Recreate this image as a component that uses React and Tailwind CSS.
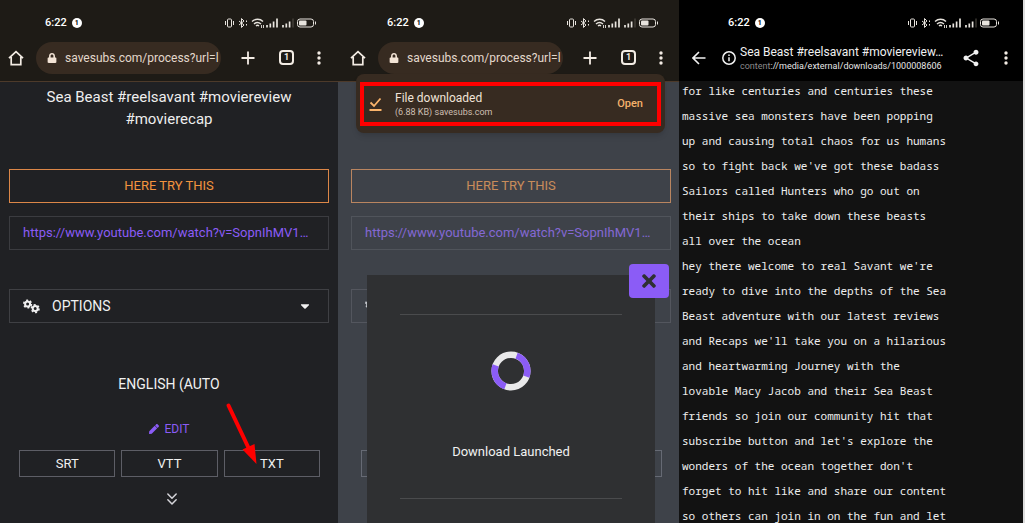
import { FaCaretDown, FaLock, FaPen, FaTimes } from 'react-icons/fa'
import { MdShare } from 'react-icons/md'
import { ChevronsDown } from 'lucide-react'

const VIDEO_URL = 'https://www.youtube.com/watch?v=SopnIhMV1'

const FORMATS = ['SRT', 'VTT', 'TXT']

const TRANSCRIPT = [
  'for like centuries and centuries these',
  'massive sea monsters have been popping',
  'up and causing total chaos for us humans',
  "so to fight back we've got these badass",
  'Sailors called Hunters who go out on',
  'their ships to take down these beasts',
  'all over the ocean',
  "hey there welcome to real Savant we're",
  'ready to dive into the depths of the Sea',
  'Beast adventure with our latest reviews',
  "and Recaps we'll take you on a hilarious",
  'and heartwarming Journey with the',
  'lovable Macy Jacob and their Sea Beast',
  'friends so join our community hit that',
  "subscribe button and let's explore the",
  "wonders of the ocean together don't",
  'forget to hit like and share our content',
  'so others can join in on the fun and let',
]

function StatusIcons() {
  return (
    <svg width="92" height="12" viewBox="0 0 92 12" fill="none" stroke="#e8e4de">
      {/* vibrate */}
      <rect x="2.500" y="2" width="4" height="8" rx="1" />
      <path d="M0.500 4v4M8.500 4v4" />
      {/* bluetooth */}
      <path d="M14 4l5 4-2.500 2.500v-9L19 4l-5 4M21.500 3.500v1.500M21.500 7v1.500" />
      {/* wifi */}
      <path d="M27 4.500c3.300-3 8-3 11 0M29 7c2.200-2 4.800-2 7 0M31 9c1-.9 2-.9 3 0" strokeWidth="1.400" />
      <path d="M36.500 8v3M38.500 8v3" strokeWidth="0.900" />
      {/* signal bars */}
      <path d="M42 8v2.500M45.300 6.500v4M48.600 4.500v6M52 1.500v9" strokeWidth="1.700" />
      <path d="M58 8v2.500M61.300 6.500v4M64.600 4.500v6" strokeWidth="1.700" />
      <path d="M68 1.500v9" stroke="#57524b" />
      {/* battery */}
      <rect x="72.500" y="2" width="16" height="8" rx="2.500" />
      <rect x="74" y="3.500" width="7.500" height="5" rx="1" fill="#e8e4de" stroke="none" />
      <path d="M90.500 4.500v3" />
    </svg>
  )
}

function StatusBar() {
  return (
    <div className="flex h-[22px] items-center justify-between">
      <div className="flex items-center gap-[5px] text-[11px] font-medium text-white">
        <span>6:22</span>
        <span className="flex size-2.5 items-center justify-center rounded-full bg-white text-[7px] font-bold text-black">1</span>
      </div>
      <StatusIcons />
    </div>
  )
}

function MoreButton() {
  return (
    <button type="button" aria-label="More options">
      <svg width="6" height="16" viewBox="0 0 6 16" fill="#f3ece4">
        <circle cx="3" cy="3" r="1.700" />
        <circle cx="3" cy="8" r="1.700" />
        <circle cx="3" cy="13" r="1.700" />
      </svg>
    </button>
  )
}

function BrowserToolbar() {
  return (
    <div className="flex h-[47px] items-center">
      <button type="button" aria-label="Home">
        <svg width="16" height="16" viewBox="0 0 16 16" fill="none" stroke="#f3ece4" strokeWidth="1.700">
          <path d="M1 8.200L8 1.600l7 6.600M3.200 7v7.700h9.600V7" />
        </svg>
      </button>
      <div className="ml-3 flex h-8 min-w-0 flex-1 items-center gap-2 rounded-full bg-[#372b21] pl-[11px] pr-1.5">
        <FaLock className="size-2.5 shrink-0 text-[#f3e4d6]" />
        <span className="whitespace-nowrap text-xs text-[#e3d8cc]">savesubs.com/process?url=l</span>
      </div>
      <button type="button" aria-label="New tab" className="ml-5">
        <svg width="14" height="14" viewBox="0 0 14 14" stroke="#f3ece4" strokeWidth="1.800">
          <path d="M7 0.500v13M0.500 7h13" />
        </svg>
      </button>
      <button
        type="button"
        aria-label="Tabs"
        className="ml-6 flex size-[15px] items-center justify-center rounded-[4px] border-2 border-[#f3ece4] text-[9px] font-bold text-[#f3ece4]"
      >
        1
      </button>
      <div className="ml-[22px] flex">
        <MoreButton />
      </div>
    </div>
  )
}

function Gears() {
  return (
    <svg width="17" height="15" viewBox="0 0 17 15" fill="none" stroke="#f1f1f1">
      <circle cx="4.600" cy="5" r="2.500" strokeWidth="2" />
      <circle cx="4.600" cy="5" r="3.800" strokeWidth="1.600" strokeDasharray="1.990 1.990" />
      <circle cx="12.200" cy="9.600" r="2.500" strokeWidth="2" />
      <circle cx="12.200" cy="9.600" r="3.800" strokeWidth="1.600" strokeDasharray="1.990 1.990" />
    </svg>
  )
}

function Arrow() {
  return (
    <svg className="pointer-events-none absolute -top-12 left-0 z-10" width="36" height="64" viewBox="0 0 36 64">
      <path d="M4.500 3.500L26 49" stroke="#fe0000" strokeWidth="4" strokeLinecap="round" />
      <path d="M18.500 47.500L30.500 42L32.500 62z" fill="#fe0000" />
    </svg>
  )
}

// covered: the toast and the modal sit on top, so the labels under them are switched off
function SubtitlePage({ arrow, covered }) {
  const label = covered ? 'invisible' : ''
  return (
    <div className="flex flex-col pt-1">
      <h1 className={`mx-auto max-w-[260px] text-center text-[15px] leading-[22px] text-[#eeeeee] ${label}`}>
        Sea Beast #reelsavant #moviereview #movierecap
      </h1>
      <button type="button" className="mt-[39px] h-[34px] border border-[#dc8748] text-[13px] text-[#f2943f]">
        HERE TRY THIS
      </button>
      <div className="mt-[13px] flex h-[34px] items-center border border-[#3b3c40] pl-[13px] text-[13px] text-[#8b5cf6]">
        <a href={VIDEO_URL} className="whitespace-nowrap">{VIDEO_URL}…</a>
      </div>
      <button type="button" className="mt-[39px] flex h-[34px] items-center border border-[#3f4044] pl-[13px] pr-4 text-sm text-[#f1f1f1]">
        <Gears />
        <span className={`ml-3 ${label}`}>OPTIONS</span>
        <FaCaretDown className="ml-auto size-3.5" />
      </button>
      <h2 className={`mt-[51px] text-center text-sm leading-5 text-[#f1f1f1] ${label}`}>ENGLISH (AUTO</h2>
      <button type="button" className={`mx-auto mt-[25px] flex h-5 items-center gap-1.5 text-xs text-[#8b5cf6] ${label}`}>
        <FaPen className="size-2.5" />
        EDIT
      </button>
      <div className="ml-2.5 mr-[9px] mt-[11px] grid grid-cols-3 gap-1.5">
        {FORMATS.map(format => (
          <div key={format} className="relative flex">
            <button type="button" className="h-[27px] flex-1 border border-[#5d5e66] text-[13px] text-[#f1f1f1]">
              <span className={label}>{format}</span>
            </button>
            {arrow && format === 'TXT' && <Arrow />}
          </div>
        ))}
      </div>
      <div className="mt-3 flex justify-center pl-1.5">
        <ChevronsDown className="size-5 text-[#d5d5da]" strokeWidth={1.8} />
      </div>
    </div>
  )
}

function DownloadToast() {
  return (
    <div className="absolute left-[18px] right-3.5 top-[74px] z-20 rounded-lg bg-[#372b21] px-1 pb-[7px] pt-2 shadow-md">
      <div className="flex h-11 items-center border-4 border-[#fe0000] pl-[5px] pr-3.5">
        <svg width="13" height="14" viewBox="0 0 13 14" fill="none" stroke="#fbb46b" strokeWidth="1.800">
          <path d="M1.500 5.500L5 9l6.500-7.500M0.500 13h12" />
        </svg>
        <div className="ml-[13px]">
          <div className="text-xs leading-4 text-[#f0e3d8]">File downloaded</div>
          <div className="text-[9px] leading-3 text-[#cdbfb2]">(6.88 KB) savesubs.com</div>
        </div>
        <button type="button" className="ml-auto text-[11px] font-medium text-[#f4b26c]">Open</button>
      </div>
    </div>
  )
}

function Spinner() {
  return (
    <svg width="40" height="40" viewBox="0 0 40 40" fill="none" strokeWidth="6.500">
      <circle cx="20" cy="20" r="16.300" stroke="#e9e9ea" />
      <circle
        cx="20"
        cy="20"
        r="16.300"
        stroke="#8b5cf6"
        pathLength="100"
        strokeDasharray="25 25"
        transform="rotate(-70 20 20)"
      />
    </svg>
  )
}

function DownloadModal() {
  return (
    <div role="dialog" aria-label="Download" className="absolute bottom-0 left-[29px] right-6 top-[275px] z-10 bg-[#2f3032] px-[33px] pt-[39px]">
      <button
        type="button"
        aria-label="Close"
        className="absolute -right-3.5 -top-[11px] flex h-[34px] w-10 items-center justify-center rounded bg-[#8b5cf6] text-[#2f3032]"
      >
        <FaTimes className="size-5" />
      </button>
      <div className="flex flex-col items-center border-y border-[#4a4b4d] pb-9 pt-9 text-[13px] leading-5 text-[#f1f1f1]">
        <Spinner />
        <p className="mt-[51px]">Download Launched</p>
      </div>
    </div>
  )
}

function TranscriptViewer() {
  return (
    <section className="min-w-0 overflow-hidden border-r-2 border-[#dedede] bg-[#121212]">
      <header className="bg-black pt-3">
        <div className="pl-[49px] pr-[23px]">
          <StatusBar />
        </div>
        <div className="flex h-[47px] items-center pl-[13px] pr-3.5">
          <button type="button" aria-label="Back">
            <svg width="14" height="14" viewBox="0 0 14 14" fill="none" stroke="#f1f1f1" strokeWidth="1.600">
              <path d="M13.500 7H1.500M7 1L1 7l6 6" />
            </svg>
          </button>
          <svg className="ml-4 shrink-0" width="14" height="14" viewBox="0 0 14 14" fill="none" stroke="#f1f1f1" strokeWidth="1.500">
            <circle cx="7" cy="7" r="6.200" />
            <path d="M7 6.200v4M7 3.500v1.500" />
          </svg>
          <div className="ml-1 min-w-0 flex-1 whitespace-nowrap">
            <div className="text-xs leading-4 text-[#f1f1f1]">Sea Beast #reelsavant #moviereview…</div>
            <div className="text-[9px] leading-3 text-[#e6e6e6]">
              <span className="text-[#8a8a8a]">content</span>://media/external/downloads/1000008606
            </div>
          </div>
          <button type="button" aria-label="Share">
            <MdShare className="size-5 text-[#f1f1f1]" />
          </button>
          <div className="ml-[22px] flex">
            <MoreButton />
          </div>
        </div>
      </header>
      <div className="flex flex-col gap-[5px] whitespace-nowrap pl-[3px] font-['Noto_Sans_Mono','DejaVu_Sans_Mono',monospace] text-[11px] leading-5 text-[#eeeeee]">
        {TRANSCRIPT.map(line => (
          <p key={line}>{line}</p>
        ))}
      </div>
    </section>
  )
}

export default function App() {
  return (
    <main className="grid h-screen grid-cols-[338fr_341fr_346fr] overflow-hidden bg-[#202124] font-[Roboto,sans-serif]">
      <section className="min-w-0 overflow-hidden">
        <header className="border-b border-[#4d3a2a] bg-[#1e1b16] pt-3">
          <div className="pl-[45px] pr-[21px]">
            <StatusBar />
          </div>
          <div className="pl-2 pr-4">
            <BrowserToolbar />
          </div>
        </header>
        <div className="px-[9px]">
          <SubtitlePage arrow />
        </div>
      </section>

      <section className="relative min-w-0 overflow-hidden">
        <header className="border-b border-[#4d3a2a] bg-[#1e1b16] pt-3">
          <div className="pl-[49px] pr-5">
            <StatusBar />
          </div>
          <div className="pl-3 pr-[15px]">
            <BrowserToolbar />
          </div>
        </header>
        <div className="relative h-full pl-[13px] pr-2">
          <SubtitlePage covered />
          <div className="absolute inset-0 bg-[#788290]/35" />
        </div>
        <DownloadModal />
        <DownloadToast />
      </section>

      <TranscriptViewer />
    </main>
  )
}
